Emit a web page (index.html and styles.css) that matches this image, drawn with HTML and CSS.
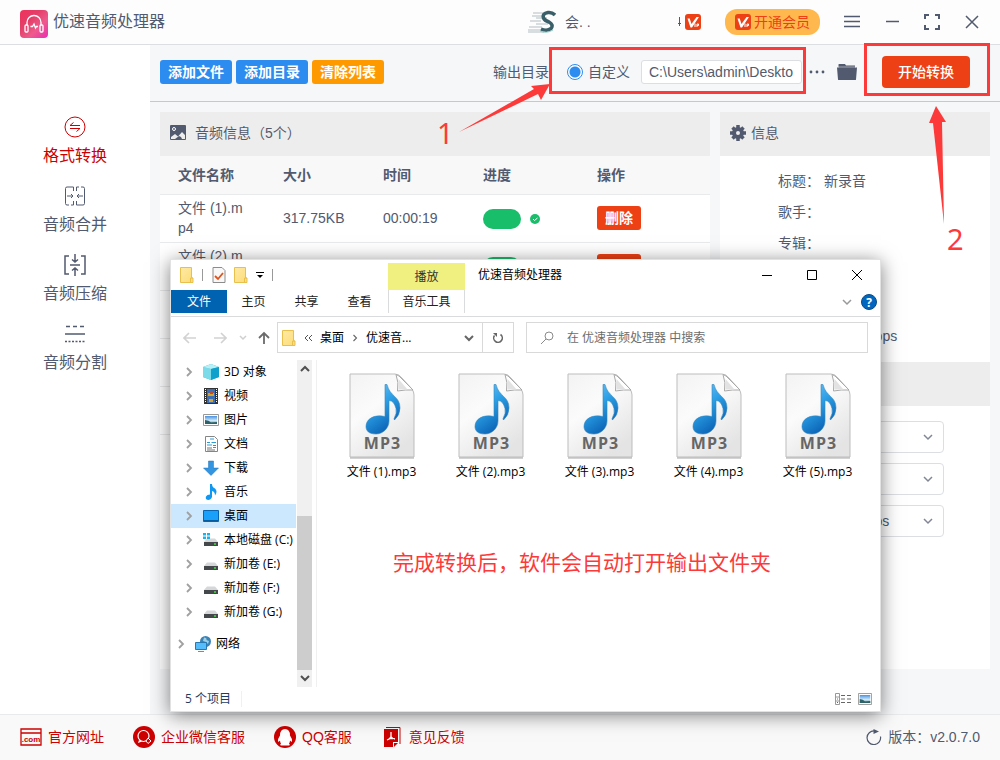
FILE: index.html
```html
<!DOCTYPE html>
<html lang="zh-CN">
<head>
    <meta charset="UTF-8">
    <meta name="viewport" content="width=device-width, initial-scale=1">
    <title>优速音频处理器</title>
    <link rel="stylesheet" href="styles.css">
</head>
<body>
    <!-- 公用图标 -->
    <svg class="defs" aria-hidden="true">
        <defs>
            <linearGradient id="g-logo" x1="0" y1="0" x2="1" y2="1">
                <stop offset="0" stop-color="#f0315c"/>
                <stop offset=".35" stop-color="#e23f68"/>
                <stop offset=".65" stop-color="#ee5a8c"/>
                <stop offset="1" stop-color="#ea2bb4"/>
            </linearGradient>
            <linearGradient id="g-paper" x1="0" y1="0" x2=".6" y2="1">
                <stop offset="0" stop-color="#f3f3f3"/>
                <stop offset=".45" stop-color="#fbfbfb"/>
                <stop offset="1" stop-color="#e4e4e4"/>
            </linearGradient>
            <linearGradient id="g-note" x1="0" y1="0" x2=".5" y2="1">
                <stop offset="0" stop-color="#7cc8f8"/>
                <stop offset=".5" stop-color="#2b9fe6"/>
                <stop offset="1" stop-color="#0a62b4"/>
            </linearGradient>
            <linearGradient id="g-sky" x1="0" y1="0" x2="0" y2="1">
                <stop offset="0" stop-color="#4b92e0"/>
                <stop offset=".6" stop-color="#d4ecfa"/>
                <stop offset="1" stop-color="#2f6c72"/>
            </linearGradient>
            <linearGradient id="g-folder" x1="0" y1="0" x2="1" y2="1">
                <stop offset="0" stop-color="#ffeaa6"/>
                <stop offset="1" stop-color="#fddc76"/>
            </linearGradient>
        </defs>
        <symbol id="i-folder" viewBox="0 0 14 16">
            <path d="M.5.5h11v10.500h1.500v4.500H.5z" fill="url(#g-folder)" stroke="#e9c04c"/>
            <path d="M10.500 15.500V11h2.500" fill="none" stroke="#e9c04c"/>
        </symbol>
        <symbol id="i-vip" viewBox="0 0 16 16">
            <rect width="16" height="16" rx="3" fill="#ed4014"/>
            <path d="M2.500 4.500h2.200L6.500 10l5-7H14L7 13.500H5.500z" fill="#fff"/>
            <path d="M10 9.500V13M12 13V10h1.500v1.500H12" fill="none" stroke="#fff"/>
        </symbol>
        <symbol id="i-right" viewBox="0 0 8 10">
            <path d="M2 1l4 4-4 4" fill="none" stroke="#a0a0a0" stroke-width="1.800"/>
        </symbol>
        <symbol id="i-down" viewBox="0 0 10 8">
            <path d="M1 2l4 4 4-4" fill="none" stroke="currentColor" stroke-width="1.500"/>
        </symbol>
        <symbol id="i-drive" viewBox="0 0 16 16">
            <path d="M4 6.500h8l3 3.500H1z" fill="#d5d7d9"/>
            <path d="M1 10h14v4H1z" fill="#45484b"/>
            <path d="M11 12h2" stroke="#3ee23e" stroke-width="1.500"/>
        </symbol>
        <symbol id="i-photo" viewBox="0 0 16 12">
            <path d="M.5.5h15v11H.5z" fill="#fff" stroke="#999"/>
            <path d="M2 2h12v8H2z" fill="url(#g-sky)"/>
            <path d="M2 6q4 0 6 2.500l6-.5v2H2z" fill="#2d6269"/>
        </symbol>
        <symbol id="i-mp3" viewBox="0 0 66 86">
            <path d="M1 1h45q4 0 7 4l10 11q2 3 2 6v62H1z" fill="url(#g-paper)" stroke="#bdbdbd"/>
            <path d="M1 85h64" stroke="#a8a8a8"/>
            <path d="M47 1.500q3 8 1.500 16.500 8-1.500 15.500-1L50 3z" fill="#fff" stroke="#a9a9a9"/>
            <path d="M49.500 6v10.500h9z" fill="#e2e2e2"/>
            <path d="M36 11.500h2C41 24 51 23 51 35q0 7-5.500 12-1-1 0-2.500 2.500-4 1.500-9-2-8-7-8V48c0 7-6 13-13 13-7 0-10-3-10-7.500C17 46 25 41 36 43.500z" fill="url(#g-note)" stroke="#3487bd" stroke-width=".6"/>
        </symbol>
    </svg>

    <div class="app">
        <header class="topbar">
            <svg class="logo" viewBox="0 0 28 28">
                <rect width="28" height="28" rx="4" fill="url(#g-logo)"/>
                <path d="M7 15v-2.500a7 7 0 0 1 14 0V15M10.500 16.500h2l1.500-2.500 1.500 4 1-1.500h1.500" fill="none" stroke="#fff" stroke-width="1.300"/>
                <rect x="5" y="15" width="3" height="7" rx="1" fill="none" stroke="#fff" stroke-width="1.300"/>
                <rect x="20" y="15" width="3" height="7" rx="1" fill="none" stroke="#fff" stroke-width="1.300"/>
            </svg>
            <h1>优速音频处理器</h1>
            <div class="user">
                <svg class="avatar" viewBox="0 0 28 24">
                    <path d="M5 3h12M4 6h12M8 8h11M2 11h11M8 14h12M1 17h13M0 20h18M0 22h16" stroke="#b4bdc1"/>
                    <path d="M27 5q-3-3-7-2.500-6 1-4.500 5.500 1 2.500 5.500 4 5 3 2 6.500-4 3-10 .5" fill="none" stroke="#3b5f68" stroke-width="3.500"/>
                    <path d="M12 21q6 3 13-1" fill="none" stroke="#8fd0c4"/>
                </svg>
                <span class="user-name">会. .</span>
                <svg class="tail" viewBox="0 0 4 12"><path d="M2.500 1v9M1 7.500h3" stroke="#515a6e" fill="none"/></svg>
                <svg class="vip" viewBox="0 0 16 16"><use href="#i-vip"/></svg>
            </div>
            <button class="btn-vip" type="button"><svg class="vip" viewBox="0 0 16 16"><use href="#i-vip"/></svg>开通会员</button>
            <div class="win-tools">
                <button type="button" aria-label="菜单"><svg viewBox="0 0 16 16"><path d="M0 2.500h16M0 7.500h16M0 12.500h16"/></svg></button>
                <button type="button" aria-label="最小化"><svg viewBox="0 0 16 16"><path d="M2 7.500h13"/></svg></button>
                <button type="button" aria-label="全屏"><svg viewBox="0 0 16 16"><path d="M1 5V1h4M11 1h4v4M15 11v4h-4M5 15H1v-4" stroke-width="2"/></svg></button>
                <button type="button" aria-label="关闭"><svg viewBox="0 0 16 16"><path d="M2 2l12 12M14 2L2 14"/></svg></button>
            </div>
        </header>

        <div class="body">
            <nav class="sidebar">
                <a href="#" class="active">
                    <svg viewBox="0 0 22 22"><circle cx="11" cy="11" r="10"/><path d="M16 9.500H6l3.500-3M6 12.500h10l-3.500 3"/></svg>
                    格式转换
                </a>
                <a href="#">
                    <svg viewBox="0 0 22 22"><path d="M9.500 6V2H3q-1.500 0-1.500 1.500v15Q1.500 20 3 20h2M7 20h2.500v-4M12.500 6V2H15M17 2h2q1.500 0 1.500 1.500v15Q20.500 20 19 20h-6.500v-4M3 11h6M7 9l2 2-2 2M19 11h-6M15 9l-2 2 2 2"/></svg>
                    音频合并
                </a>
                <a href="#">
                    <svg viewBox="0 0 22 22"><path d="M5 2H1v18h4M17 2h4v18h-4M6 11h10M11 0v8M8 5.500L11 8l3-2.500M11 22v-8M8 16.500l3-2.500 3 2.500" stroke-width="1.500"/></svg>
                    音频压缩
                </a>
                <a href="#">
                    <svg viewBox="0 0 22 22"><path d="M1 11h20" stroke-width="1.500"/><path d="M2 3.500h19" stroke-dasharray="4 3" stroke-width="1.500"/><path d="M1 18.500h20" stroke-dasharray="2 1.500" stroke-width="1.500"/></svg>
                    音频分割
                </a>
            </nav>

            <main class="main">
                <div class="toolbar">
                    <button type="button" class="btn primary">添加文件</button>
                    <button type="button" class="btn primary">添加目录</button>
                    <button type="button" class="btn warning">清除列表</button>
                    <label class="out-label" for="out-path">输出目录:</label>
                    <label class="radio"><input type="radio" name="out" checked>自定义</label>
                    <input class="path" id="out-path" type="text" value="C:\Users\admin\Deskto">
                    <button type="button" class="icon-btn more" aria-label="更多"><svg width="16" height="16" viewBox="0 0 16 16"><circle cx="2" cy="8" r="1.400"/><circle cx="8" cy="8" r="1.400"/><circle cx="14" cy="8" r="1.400"/></svg></button>
                    <button type="button" class="icon-btn open-dir" aria-label="打开目录"><svg width="20" height="18" viewBox="0 0 20 18"><path d="M1.500 5V1.500Q1.500 1 2 1h6l1 1.500h9V5z"/><path d="M0 4.500h20l-1 12q0 .5-1 .5H2q-1 0-1-.5z"/><path d="M1 4h18" stroke="#f5f7f9" stroke-width=".5"/></svg></button>
                    <button type="button" class="btn-start">开始转换</button>
                </div>

                <div class="panels">
                    <section class="panel list">
                        <h2>
                            <svg width="16" height="16" viewBox="0 0 16 16"><rect width="16" height="15" rx="1" fill="#515a6e"/><circle cx="4" cy="4" r="1.500" fill="none" stroke="#fff"/><path d="M1 12l4-3 3 2.500L12 7l3 3v4H1z" fill="#ededed"/><path d="M5 14l4-3 2 1 1 2z" fill="#515a6e"/></svg>
                            音频信息（5个）
                        </h2>
                        <table>
                            <thead>
                                <tr><th class="c-name">文件名称</th><th class="c-size">大小</th><th class="c-time">时间</th><th class="c-prog">进度</th><th>操作</th></tr>
                            </thead>
                            <tbody>
                                <tr><td>文件 (1).mp4</td><td>317.75KB</td><td>00:00:19</td><td><span class="progress"></span><svg class="ok" viewBox="0 0 10 10"><circle cx="5" cy="5" r="5"/><path d="M3 5l1.500 1.500L7.500 4"/></svg></td><td><button type="button" class="btn danger">删除</button></td></tr>
                                <tr><td>文件 (2).mp4</td><td></td><td></td><td><span class="progress"></span></td><td><button type="button" class="btn danger" aria-label="删除"></button></td></tr>
                                <tr><td></td><td></td><td></td><td></td><td></td></tr>
                                <tr><td></td><td></td><td></td><td></td><td></td></tr>
                                <tr><td></td><td></td><td></td><td></td><td></td></tr>
                            </tbody>
                        </table>
                    </section>

                    <section class="panel info">
                        <h2>
                            <svg width="16" height="16" viewBox="0 0 16 16"><path d="M8 0v16M0 8h16M2.500 2.500l11 11M13.500 2.500l-11 11" stroke="#515a6e" stroke-width="3.500"/><circle cx="8" cy="8" r="4" fill="#ededed" stroke="#515a6e" stroke-width="4"/></svg>
                            信息
                        </h2>
                        <dl>
                            <div><dt>标题：</dt><dd>新录音</dd></div>
                            <div><dt>歌手：</dt><dd></dd></div>
                            <div><dt>专辑：</dt><dd></dd></div>
                            <div></div>
                            <div></div>
                            <div><dt></dt><dd>128000 bps</dd></div>
                        </dl>
                        <h2></h2>
                        <form class="settings">
                            <div class="field"><select aria-label="格式"></select><svg viewBox="0 0 10 8"><use href="#i-down"/></svg></div>
                            <div class="field"><select aria-label="声道"></select><svg viewBox="0 0 10 8"><use href="#i-down"/></svg></div>
                            <div class="field"><select aria-label="码率"><option>128000 bps</option></select><svg viewBox="0 0 10 8"><use href="#i-down"/></svg></div>
                        </form>
                    </section>
                </div>
            </main>
        </div>

        <footer class="footer">
            <a href="#"><svg viewBox="0 0 22 22"><path d="M1 3h20v16H1zM1 7h20" fill="none" stroke="#c00" stroke-width="1.300"/><text x="11" y="16" text-anchor="middle" class="com-text">.com</text></svg>官方网址</a>
            <a href="#"><svg viewBox="0 0 22 22"><circle cx="11" cy="11" r="11" fill="#c00"/><circle cx="10.500" cy="10" r="5.500" fill="none" stroke="#fff" stroke-width="1.200"/><path d="M6 14l-1 3 4-1.500" fill="#fff"/><path d="M15 12l3 3-3 2.500-2-2.500z" fill="#c00" stroke="#fff"/></svg>企业微信客服</a>
            <a href="#"><svg viewBox="0 0 22 22"><circle cx="11" cy="11" r="11" fill="#c00"/><path d="M11 3q-5 0-5 6.500-2.500 3.500-2 6 1 .5 2-1 0 2 1 3-2 2 1 2h6q3 0 1-2 1-1 1-3 1 1.500 2 1 .5-2.500-2-6Q16 3 11 3z" fill="#fff"/></svg>QQ客服</a>
            <a href="#"><svg viewBox="0 0 22 22"><path d="M5 1.500h14V18" fill="none" stroke="#c00"/><path d="M3 3h14v13h-5v5H3z" fill="#c00"/><path d="M13 17h4l-4 4z" fill="#c00"/><path d="M10 6v4q0 2.500-4 4M10 10.500q1 2 4 2.500M8 12.500h4" fill="none" stroke="#fff" stroke-width="1.300"/></svg>意见反馈</a>
            <span class="version"><svg width="16" height="16" viewBox="0 0 16 16"><path d="M14.500 7.500A6.800 6.800 0 1 1 8.500 2" fill="none" stroke="#515a6e" stroke-width="1.200"/><path d="M7.500 0L13 2.500 7.500 5z" fill="#515a6e"/></svg>版本：v2.0.7.0</span>
        </footer>
    </div>

    <!-- 资源管理器窗口 -->
    <div class="explorer">
        <div class="ex-title">
            <div class="quick">
                <svg width="14" height="16"><use href="#i-folder"/></svg>
                <i class="sep"></i>
                <svg width="14" height="16" viewBox="0 0 14 16"><path d="M1 .5h9L13 3.500v12H1z" fill="#f8f8f8" stroke="#8c8c8c"/><path d="M3 9l3 3 5-6" fill="none" stroke="#e0521c" stroke-width="1.800"/></svg>
                <svg width="14" height="16"><use href="#i-folder"/></svg>
                <svg width="8" height="8" viewBox="0 0 8 8"><path d="M0 1.500h8" stroke="#000"/><path d="M1 4h6L4 7z"/></svg>
                <i class="sep"></i>
            </div>
            <span class="play-tab">播放</span>
            <span class="ex-name">优速音频处理器</span>
            <div class="ex-ctrl">
                <button type="button" aria-label="最小化"><svg viewBox="0 0 12 12"><path d="M1 6.500h10"/></svg></button>
                <button type="button" aria-label="最大化"><svg viewBox="0 0 12 12"><path d="M1.500 1.500h9v9h-9z"/></svg></button>
                <button type="button" aria-label="关闭"><svg viewBox="0 0 12 12"><path d="M1 1l10 10M11 1L1 11"/></svg></button>
            </div>
        </div>
        <div class="ex-tabs">
            <button type="button" class="file-tab">文件</button>
            <button type="button">主页</button>
            <button type="button">共享</button>
            <button type="button">查看</button>
            <button type="button" class="music-tab">音乐工具</button>
            <svg class="fold" viewBox="0 0 10 8"><use href="#i-down"/></svg>
            <svg class="help" viewBox="0 0 16 16"><circle cx="8" cy="8" r="7.500" fill="#0067c0" stroke="#0b4a85"/><text x="8" y="12.500" text-anchor="middle" class="help-text">?</text></svg>
        </div>
        <div class="ex-nav">
            <button type="button" class="w30" aria-label="后退"><svg width="14" height="12" viewBox="0 0 14 12"><path d="M13 6H1M6 1L1 6l5 5" stroke="#d2d2d2" stroke-width="1.600"/></svg></button>
            <button type="button" class="w30" aria-label="前进"><svg width="14" height="12" viewBox="0 0 14 12"><path d="M1 6h12M8 1l5 5-5 5" stroke="#d2d2d2" stroke-width="1.600"/></svg></button>
            <button type="button" class="w16" aria-label="最近"><svg width="8" height="6" viewBox="0 0 8 6"><path d="M1 1l3 3 3-3" stroke="#cfcfcf" stroke-width="1.500"/></svg></button>
            <button type="button" class="w26" aria-label="向上"><svg width="12" height="14" viewBox="0 0 12 14"><path d="M6 13V2M1 7l5-5 5 5" stroke="#6b6b6b" stroke-width="1.800"/></svg></button>
            <div class="address">
                <svg width="14" height="16"><use href="#i-folder"/></svg>
                <svg class="crumb" width="8" height="8" viewBox="0 0 8 8"><path d="M4 1L1 4l3 3M8 1L5 4l3 3" stroke="#555"/></svg>
                <span>桌面</span>
                <svg width="6" height="8" viewBox="0 0 8 10"><path d="M2 1l4 4-4 4" fill="none" stroke="#666" stroke-width="1.500"/></svg>
                <span>优速音...</span>
                <svg class="addr-down" viewBox="0 0 10 8"><path d="M1 2l4 4 4-4" stroke="#666" stroke-width="2"/></svg>
                <button type="button" aria-label="刷新"><svg width="12" height="12" viewBox="0 0 12 12"><path d="M8.500 2.500A4.300 4.300 0 1 1 2.500 3.500" stroke="#666" stroke-width="1.600"/><path d="M1 1h4v4z" fill="#666"/></svg></button>
            </div>
            <div class="search">
                <svg width="14" height="14" viewBox="0 0 14 14"><circle cx="9" cy="5" r="4"/><path d="M6 8l-5 5"/></svg>
                <input type="text" aria-label="搜索" placeholder="在 优速音频处理器 中搜索">
            </div>
        </div>
        <div class="ex-body">
            <ul class="tree">
                <li><svg class="arrow"><use href="#i-right"/></svg><svg class="ico" viewBox="0 0 16 16"><path d="M0 3l8-3 8 3v10l-8 3-8-3z" fill="#31b4cf"/><path d="M0 3l8 2v11l-8-3z" fill="#7bdbe8"/><path d="M0 3l8-3 8 3-8 2z" fill="#b9f0f5"/><path d="M8 5l8-2v10l-8 3z" fill="#10a0cc"/></svg>3D 对象</li>
                <li><svg class="arrow"><use href="#i-right"/></svg><svg class="ico" viewBox="0 0 16 16"><path d="M1 0h14v16H1z" fill="#333"/><path d="M4 1h8v14H4z" fill="#3d6eb4"/><path d="M5 5h6v3H5zM6 11h4v3H6z" fill="#d4a32e"/><path d="M7 3h3v3H7z" fill="#bd4b34"/><path d="M2.500 1v14M13.500 1v14" stroke="#fff" stroke-dasharray="1 1"/></svg>视频</li>
                <li><svg class="arrow"><use href="#i-right"/></svg><svg class="ico" viewBox="0 0 16 12"><use href="#i-photo"/></svg>图片</li>
                <li><svg class="arrow"><use href="#i-right"/></svg><svg class="ico" viewBox="0 0 16 16"><path d="M2.500.5h9l3 3v12h-12z" fill="#fff" stroke="#858585"/><path d="M7 3h4M4 6.500h3M8.500 6.500H13M4 9h5M10 11.500h3" stroke="#2b9bd4"/><path d="M4 12h5M4 14h8M10 9.500h3" stroke="#777"/></svg>文档</li>
                <li><svg class="arrow"><use href="#i-right"/></svg><svg class="ico" viewBox="0 0 16 16"><path d="M5.500 1h5v7h5L8 15.500.5 8h5z" fill="#3394e0" stroke="#2375b8" stroke-width=".5"/></svg>下载</li>
                <li><svg class="arrow"><use href="#i-right"/></svg><svg class="ico" viewBox="0 0 16 16"><path d="M7 0h2q0 3 3 4.500 3 3 0 7 0-4-3-4.500v6q-1 3-4 3-3-.5-2-3.500 1-2 4-2z" fill="#0f97f2"/></svg>音乐</li>
                <li class="selected"><svg class="arrow"><use href="#i-right"/></svg><svg class="ico" viewBox="0 0 16 16"><path d="M.5 2.500h15v11H.5z" fill="#18a0fb" stroke="#0a64ad"/><path d="M1 12.500h14" stroke="#0b5c9c"/></svg>桌面</li>
                <li><svg class="arrow"><use href="#i-right"/></svg><svg class="ico" viewBox="0 0 16 16"><use href="#i-drive"/><path d="M0 1h3v2.500H0zM4 1h3v2.500H4zM0 4.500h3V7H0zM4 4.500h3V7H4z" fill="#16b4ee"/></svg>本地磁盘 (C:)</li>
                <li><svg class="arrow"><use href="#i-right"/></svg><svg class="ico"><use href="#i-drive"/></svg>新加卷 (E:)</li>
                <li><svg class="arrow"><use href="#i-right"/></svg><svg class="ico"><use href="#i-drive"/></svg>新加卷 (F:)</li>
                <li><svg class="arrow"><use href="#i-right"/></svg><svg class="ico"><use href="#i-drive"/></svg>新加卷 (G:)</li>
                <li class="network"><svg class="arrow"><use href="#i-right"/></svg><svg class="ico" viewBox="0 0 16 16"><circle cx="10.500" cy="5.500" r="5.500" fill="#3a83b5"/><path d="M9 1.500q3 0 2.500 2.500l2.500 1-1 3-2-2-3-1z" fill="#9fcfe4"/><path d="M.5 6.500h11v7H.5z" fill="#55bdfb" stroke="#2a78b0"/><path d="M3 15.500h6" stroke="#888"/></svg>网络</li>
            </ul>
            <div class="scroll">
                <svg viewBox="0 0 10 8"><path d="M1 6l4-4 4 4"/></svg>
                <div class="thumb"></div>
                <svg viewBox="0 0 10 8"><path d="M1 2l4 4 4-4"/></svg>
            </div>
            <div class="files">
                <figure><div class="cover"><svg viewBox="0 0 66 86"><use href="#i-mp3"/></svg><span>MP3</span></div><figcaption>文件 (1).mp3</figcaption></figure>
                <figure><div class="cover"><svg viewBox="0 0 66 86"><use href="#i-mp3"/></svg><span>MP3</span></div><figcaption>文件 (2).mp3</figcaption></figure>
                <figure><div class="cover"><svg viewBox="0 0 66 86"><use href="#i-mp3"/></svg><span>MP3</span></div><figcaption>文件 (3).mp3</figcaption></figure>
                <figure><div class="cover"><svg viewBox="0 0 66 86"><use href="#i-mp3"/></svg><span>MP3</span></div><figcaption>文件 (4).mp3</figcaption></figure>
                <figure><div class="cover"><svg viewBox="0 0 66 86"><use href="#i-mp3"/></svg><span>MP3</span></div><figcaption>文件 (5).mp3</figcaption></figure>
            </div>
        </div>
        <div class="ex-status">
            <span class="count">5 个项目</span>
            <svg width="16" height="12" viewBox="0 0 16 12"><path d="M.5.5h4v11h-4zM.5 4h4M.5 8h4" fill="none" stroke="#999"/><path d="M6 2.500h4M12 2.500h4M6 6h4M12 6h4M6 9.500h4M12 9.500h4" stroke="#666"/><path d="M2 6h1" stroke="#28c"/><path d="M2 9.500h1" stroke="#d33"/></svg>
            <svg width="14" height="12" viewBox="0 0 16 12" preserveAspectRatio="none"><use href="#i-photo"/></svg>
        </div>
    </div>

    <!-- 操作步骤标注 -->
    <div class="mark box-path"></div>
    <div class="mark box-start"></div>
    <svg class="mark arrow-one" viewBox="0 0 92 50"><path d="M0 48L75 5 72 2 91 0 82 16 79 10z"/></svg>
    <svg class="mark arrow-two" viewBox="0 0 18 120"><path d="M15 118L4 17H0L7 0l10 16h-4z"/></svg>
    <span class="mark step one">1</span>
    <span class="mark step two">2</span>
    <p class="mark tip">完成转换后，软件会自动打开输出文件夹</p>
</body>
</html>
```

FILE: styles.css
```css
* {
    box-sizing: border-box;
}

body {
    margin: 0;
    font: 14px/20px "Liberation Sans", "Noto Sans CJK SC", sans-serif;
    color: #515a6e;
    background: #f5f7f9;
}

button, input, select {
    font: inherit;
    color: inherit;
    margin: 0;
}

button {
    display: flex;
    align-items: center;
    justify-content: center;
    padding: 0;
    border: 0;
    background: none;
    cursor: pointer;
    white-space: nowrap;
}

a {
    color: inherit;
    text-decoration: none;
}

svg {
    flex: none;
}

.defs {
    position: absolute;
    width: 0;
    height: 0;
}

.app {
    display: flex;
    flex-direction: column;
    min-height: 100vh;
}

/* 顶栏 */
.topbar {
    display: flex;
    align-items: center;
    height: 45px;
    padding: 0 8px 0 20px;
    background: #fdfdfd;
    border-bottom: 1px solid #dcdee2;
}

.logo {
    width: 28px;
    height: 28px;
    margin-top: 3px;
}

h1 {
    margin: 0 auto 0 5px;
    font-size: 16px;
    font-weight: 400;
}

.user {
    display: flex;
    align-items: center;
    margin-right: 24px;
}

.avatar {
    width: 28px;
    height: 24px;
    margin-right: 9px;
}

.user-name {
    width: 112px;
}

.tail {
    width: 4px;
    height: 12px;
    margin-right: 4px;
}

.vip {
    width: 16px;
    height: 16px;
}

.btn-vip {
    width: 95px;
    height: 26px;
    gap: 3px;
    border-radius: 12px;
    background: #ffb84d;
    color: #ed4014;
}

.win-tools {
    display: flex;
    margin-left: 12px;
}

.win-tools button {
    width: 40px;
    height: 30px;
}

.win-tools svg {
    width: 16px;
    height: 16px;
    fill: none;
    stroke: #515a6e;
    stroke-width: 1.5;
}

.body {
    display: flex;
    flex: 1;
}

/* 左侧菜单 */
.sidebar {
    width: 150px;
    padding-top: 71px;
    background: #fff;
}

.sidebar a {
    display: flex;
    flex-direction: column;
    align-items: center;
    gap: 7px;
    margin-bottom: 18px;
    font-size: 16px;
    line-height: 22px;
}

.sidebar svg {
    width: 22px;
    height: 22px;
    fill: none;
    stroke: currentColor;
}

.sidebar .active {
    color: #c00;
}

.main {
    display: flex;
    flex-direction: column;
    flex: 1;
    min-width: 0;
}

/* 工具栏 */
.toolbar {
    display: flex;
    align-items: center;
    gap: 4px;
    height: 57px;
    padding: 0 30px 2px 10px;
    border-bottom: 1px solid #c5c8ce;
}

.btn {
    height: 24px;
    min-width: 44px;
    padding: 0 8px;
    border-radius: 3px;
    color: #fff;
    font-weight: 700;
}

.primary {
    background: #2d8cf0;
}

.warning {
    background: #ff9900;
}

.danger {
    background: #ed4014;
}

.out-label {
    margin-left: auto;
    white-space: nowrap;
}

.radio {
    display: flex;
    align-items: center;
    gap: 5px;
    margin: 0 7px 0 10px;
    white-space: nowrap;
}

.radio input {
    appearance: none;
    width: 16px;
    height: 16px;
    border: 1px solid #2d8cf0;
    border-radius: 50%;
    background: radial-gradient(circle, #2d8cf0 5px, #fff 6px);
}

.path {
    width: 161px;
    height: 24px;
    padding: 0 7px;
    border: 1px solid #dcdee2;
    border-radius: 3px;
    background: #fff;
}

.icon-btn svg {
    fill: #515a6e;
}

.more {
    margin-left: 3px;
}

.open-dir {
    margin-left: 8px;
}

.btn-start {
    width: 88px;
    height: 32px;
    margin-left: 21px;
    border-radius: 4px;
    background: #ed4014;
    color: #fff;
    font-weight: 500;
}

/* 列表和信息面板 */
.panels {
    display: flex;
    flex: 1;
    gap: 10px;
    padding: 10px 10px 45px;
}

.panel {
    background: #fff;
}

.list {
    flex: 1;
}

.info {
    width: 270px;
}

h2 {
    display: flex;
    align-items: center;
    gap: 9px;
    height: 44px;
    margin: 0;
    padding: 0 10px 2px;
    background: #ededed;
    font-size: 14px;
    font-weight: 400;
}

.info h2 {
    gap: 5px;
}

table {
    width: 100%;
    table-layout: fixed;
    border-collapse: collapse;
}

th, td {
    padding: 0 18px;
    border-bottom: 1px solid #e8eaec;
    text-align: left;
    word-break: break-all;
}

th {
    height: 38px;
    background: #f8f8f9;
    font-weight: 700;
}

td {
    height: 48px;
}

.c-name {
    width: 105px;
}

.c-size, .c-time {
    width: 100px;
}

.c-prog {
    width: 114px;
}

.progress {
    display: inline-block;
    width: 38px;
    height: 20px;
    margin-right: 9px;
    border-radius: 10px;
    background: #19be6b;
    vertical-align: middle;
}

.ok {
    width: 10px;
    height: 10px;
    fill: #19be6b;
    vertical-align: middle;
}

.ok path {
    fill: none;
    stroke: #fff;
}

dl {
    margin: 0;
    padding: 10px 0 10px 58px;
}

dl div {
    display: flex;
    gap: 4px;
    height: 31px;
    line-height: 31px;
}

dt {
    width: 42px;
}

dd {
    margin: 0;
}

.settings {
    padding: 15px 46px 0 20px;
}

.field {
    display: flex;
    align-items: center;
    justify-content: flex-end;
    margin-bottom: 10px;
}

.field select {
    appearance: none;
    width: 142px;
    height: 32px;
    padding: 0 24px 0 13px;
    border: 1px solid #dcdee2;
    border-radius: 4px;
    background: #fff;
}

.field svg {
    width: 10px;
    height: 8px;
    margin-left: -21px;
    margin-right: 11px;
    color: #808695;
}

/* 底栏 */
.footer {
    display: flex;
    align-items: center;
    gap: 29px;
    height: 46px;
    padding: 0 20px 2px;
    border-top: 1px solid #e8eaec;
    background: #f9f9f9;
}

.footer a {
    display: flex;
    align-items: center;
    gap: 6px;
    color: #c00;
}

.footer a svg {
    width: 22px;
    height: 22px;
}

.com-text {
    fill: #c00;
    font-size: 8px;
    font-weight: 700;
}

.version {
    display: flex;
    align-items: center;
    gap: 6px;
    margin-left: auto;
}

/* 资源管理器 */
.explorer {
    position: absolute;
    top: 259px;
    left: 170px;
    display: flex;
    flex-direction: column;
    width: 711px;
    height: 453px;
    border: 1px solid #e2e2e2;
    background: #fff;
    box-shadow: 0 3px 18px rgba(0, 0, 0, .5);
    color: #000;
    font: 12px/16px "Open Sans", "Noto Sans CJK SC", sans-serif;
}

.ex-title {
    display: flex;
    align-items: center;
    height: 30px;
    padding-right: 1px;
}

.quick {
    display: flex;
    align-items: center;
    gap: 8px;
    width: 217px;
    padding-left: 9px;
}

.sep {
    width: 1px;
    height: 12px;
    margin-right: 1px;
    background: #999;
}

.play-tab {
    align-self: flex-end;
    width: 77px;
    height: 27px;
    line-height: 27px;
    text-align: center;
    background: #f0f080;
    color: #333;
}

.ex-name {
    margin: 0 auto 0 13px;
}

.ex-ctrl {
    display: flex;
}

.ex-ctrl button {
    width: 45px;
    height: 28px;
}

.ex-ctrl svg {
    width: 12px;
    height: 12px;
    fill: none;
    stroke: #000;
}

.ex-tabs {
    display: flex;
    align-items: center;
    height: 27px;
    padding: 0 3px 3px 0;
    border-bottom: 1px solid #dadbdc;
    color: #222;
}

.ex-tabs button {
    width: 53px;
    height: 23px;
}

.ex-tabs .file-tab {
    width: 56px;
    background: #0063b1;
    color: #fff;
}

.ex-tabs .music-tab {
    width: 77px;
    margin-left: 2px;
    border: solid #dadbdc;
    border-width: 0 1px;
}

.fold {
    width: 10px;
    height: 8px;
    margin: 0 9px 0 auto;
    color: #999;
}

.help {
    width: 16px;
    height: 16px;
}

.help-text {
    fill: #fff;
    font-size: 12px;
    font-weight: 700;
}

.ex-nav {
    display: flex;
    align-items: center;
    padding: 5px 12px 7px 4px;
}

.ex-nav svg {
    fill: none;
}

.w30 {
    width: 30px;
}

.w16 {
    width: 16px;
}

.w26 {
    width: 26px;
}

.address {
    display: flex;
    align-items: center;
    gap: 8px;
    width: 237px;
    height: 31px;
    padding-left: 4px;
    border: 1px solid #d9d9d9;
}

.address .addr-down {
    width: 10px;
    height: 8px;
    margin-left: auto;
}

.address button {
    width: 31px;
    height: 29px;
    border-left: 1px solid #d9d9d9;
}

.search {
    display: flex;
    align-items: center;
    flex: 1;
    gap: 13px;
    height: 31px;
    margin-left: 12px;
    padding-left: 13px;
    border: 1px solid #d9d9d9;
}

.search svg {
    stroke: #8a8a8a;
}

.search input {
    flex: 1;
    min-width: 0;
    padding: 0;
    border: 0;
    outline: 0;
    background: none;
}

.search input::placeholder {
    color: #6d6d6d;
    opacity: 1;
}

.ex-body {
    display: flex;
    flex: 1;
    min-height: 0;
}

.tree {
    width: 125px;
    margin: 0 1px 0 0;
    padding: 0;
    list-style: none;
}

.tree li {
    display: flex;
    align-items: center;
    height: 24px;
    padding-left: 14px;
    white-space: nowrap;
}

.tree .selected {
    background: #cce8ff;
}

.tree .network {
    margin-top: 8px;
    padding-left: 6px;
}

.arrow {
    width: 8px;
    height: 10px;
    margin-right: 10px;
}

.ico {
    width: 16px;
    height: 16px;
    margin-right: 5px;
}

.scroll {
    display: flex;
    flex-direction: column;
    justify-content: space-between;
    align-items: center;
    width: 15px;
    padding: 5px 0;
    background: #f0f0f0;
}

.scroll svg {
    width: 10px;
    height: 8px;
    fill: none;
    stroke: #505050;
    stroke-width: 2;
}

.thumb {
    width: 15px;
    height: 154px;
    margin: auto 0 4px;
    background: #cdcdcd;
}

.files {
    display: flex;
    flex-wrap: wrap;
    flex: 1;
    align-content: flex-start;
    margin-left: 4px;
    padding: 13px 0 0 10px;
    border-left: 1px solid #f0f0f0;
}

figure {
    display: flex;
    flex-direction: column;
    align-items: center;
    gap: 5px;
    width: 109px;
    margin: 0;
}

.cover {
    position: relative;
    width: 66px;
    height: 86px;
}

.cover svg {
    width: 66px;
    height: 86px;
}

.cover span {
    position: absolute;
    right: 0;
    bottom: 6px;
    left: 2px;
    color: #666;
    font-size: 16px;
    font-weight: 700;
    line-height: 20px;
    letter-spacing: 1px;
    text-align: center;
}

.ex-status {
    display: flex;
    align-items: center;
    gap: 7px;
    height: 24px;
    padding: 0 8px 0 14px;
    color: #1e3c64;
}

.count {
    margin-right: auto;
    padding-right: 10px;
    border-right: 1px solid #f0f0f0;
}

/* 标注 */
.mark {
    position: absolute;
    margin: 0;
    color: #fd3a3a;
    fill: #fd3a3a;
    font-family: "Noto Sans", "Noto Sans CJK SC", sans-serif;
    pointer-events: none;
}

.box-path {
    top: 47px;
    left: 549px;
    width: 257px;
    height: 47px;
    border: 3px solid;
}

.box-start {
    top: 43px;
    left: 864px;
    width: 126px;
    height: 53px;
    border: 3px solid;
}

.arrow-one {
    top: 84px;
    left: 459px;
    width: 92px;
    height: 50px;
}

.arrow-two {
    top: 106px;
    left: 929px;
    width: 18px;
    height: 120px;
}

.step {
    font-size: 29px;
    line-height: 30px;
}

.one {
    top: 118px;
    left: 437px;
}

.two {
    top: 224px;
    left: 947px;
}

.tip {
    top: 547px;
    left: 393px;
    font-size: 21px;
    line-height: 30px;
    white-space: nowrap;
}
```
